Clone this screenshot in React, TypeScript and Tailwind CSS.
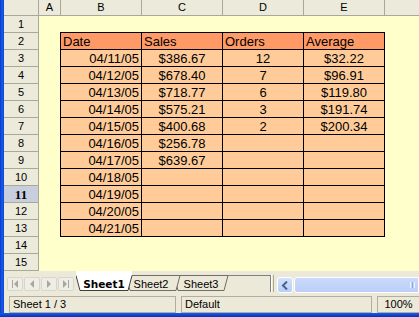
import React from "react";

const data: (string[] | null)[] = [
  ["04/11/05", "$386.67", "12", "$32.22"],
  ["04/12/05", "$678.40", "7", "$96.91"],
  ["04/13/05", "$718.77", "6", "$119.80"],
  ["04/14/05", "$575.21", "3", "$191.74"],
  ["04/15/05", "$400.68", "2", "$200.34"],
  ["04/16/05", "$256.78", "", ""],
  ["04/17/05", "$639.67", "", ""],
  ["04/18/05", "", "", ""],
  ["04/19/05", "", "", ""],
  ["04/20/05", "", "", ""],
  ["04/21/05", "", "", ""],
];

const sans = "font-['Liberation_Sans',Arial,sans-serif]";

function RowHead({ n }: { n: number }) {
  const active = n === 11;
  return (
    <div
      className={`w-[35px] shrink-0 border-r border-b border-[#ACA899] flex items-center justify-center leading-none ${
        active
          ? "bg-[#C7CFDD] font-['Liberation_Serif',serif] font-bold text-[13px]"
          : `bg-[#EBEADB] ${sans} text-[11px]`
      } text-black`}
    >
      {n}
    </div>
  );
}

function Row({ n }: { n: number }) {
  let content: React.ReactNode = null;
  if (n === 1) {
    content = <div className="w-[325px] shrink-0 border-b border-black" />;
  } else if (n === 2) {
    const heads = ["Date", "Sales", "Orders", "Average"];
    content = heads.map((h, i) => (
      <div
        key={h}
        className={`${i === 0 ? "w-[82px] border-l" : "w-[81px]"} shrink-0 border-r border-b border-black bg-[#FF9966] pl-[2px] flex items-center text-[13px] leading-none`}
      >
        {h}
      </div>
    ));
  } else if (n >= 3 && n <= 13) {
    const r = data[n - 3] as string[];
    content = (
      <>
        <div className="w-[82px] shrink-0 border-l border-r border-b border-black bg-[#FFCC99] pr-[2px] flex items-center justify-end text-[13px] leading-none">
          {r[0]}
        </div>
        {[1, 2, 3].map((i) => (
          <div
            key={i}
            className="w-[81px] shrink-0 border-r border-b border-black bg-[#FFCC99] flex items-center justify-center text-[13px] leading-none"
          >
            {r[i]}
          </div>
        ))}
      </>
    );
  }
  return (
    <div className="flex h-[17px]">
      <RowHead n={n} />
      <div className="w-[21px] shrink-0" />
      {content}
    </div>
  );
}

function NavBtn({ kind }: { kind: number }) {
  return (
    <div className="w-[16px] h-[14px] rounded-[2px] border border-[#D8D6CA] bg-[#EFEEE6] flex items-center justify-center">
      <svg width="10" height="8" viewBox="0 0 10 8">
        {kind === 0 && (
          <>
            <rect x="2" y="0" width="1" height="8" fill="#A9A79C" />
            <polygon points="8,0 4,4 8,8" fill="#A9A79C" />
          </>
        )}
        {kind === 1 && <polygon points="7,0 3,4 7,8" fill="#A9A79C" />}
        {kind === 2 && <polygon points="3,0 7,4 3,8" fill="#A9A79C" />}
        {kind === 3 && (
          <>
            <polygon points="2,0 6,4 2,8" fill="#A9A79C" />
            <rect x="7" y="0" width="1" height="8" fill="#A9A79C" />
          </>
        )}
      </svg>
    </div>
  );
}

function Tabs() {
  return (
    <div className="relative w-[194px] h-full shrink-0">
      <svg className="absolute inset-0" width="194" height="25" viewBox="0 0 194 25" shapeRendering="crispEdges">
        <line x1="0" y1="4.5" x2="194" y2="4.5" stroke="#808080" />
        <polygon points="98,4.5 152,4.5 148,19.5 102,19.5" fill="#ECE9D8" stroke="#6F6E68" shapeRendering="auto" />
        <polygon points="50,4.5 104,4.5 100,19.5 54,19.5" fill="#ECE9D8" stroke="#6F6E68" shapeRendering="auto" />
        <polygon points="0,0 56,0 56,4.5 52,19.5 4,19.5 0,4.5" fill="#FFFFFF" />
        <polyline points="0,4.5 4,19.5 52,19.5 56,4.5" fill="none" stroke="#404040" shapeRendering="auto" />
      </svg>
      <div className="relative flex pt-[6px] leading-[14px] text-[11px] text-black">
        <div className="w-[56px] text-center font-['DejaVu_Sans',sans-serif] font-bold text-[10.5px]">Sheet1</div>
        <div className={`w-[38px] text-center ${sans}`}>Sheet2</div>
        <div className={`w-[62px] text-center ${sans}`}>Sheet3</div>
      </div>
    </div>
  );
}

export default function App() {
  const rows = Array.from({ length: 15 }, (_, i) => i + 1);
  return (
    <div className={`w-[419px] h-[317px] overflow-hidden flex flex-col bg-[#ECE9D8] ${sans} text-black`}>
      <div className="flex flex-1 min-h-0">
        <div className="w-[4px] shrink-0 bg-gradient-to-r from-[#0839C8] via-[#1A5AE8] to-[#0B45D8]" />
        <div className="flex-1 flex flex-col min-w-0">
          {/* sheet */}
          <div className="bg-[#FFFFCC]">
            <div className="flex h-[16px] bg-[#EBEADB] text-[11px] leading-none">
              <div className="w-[35px] shrink-0 border-r border-b border-[#ACA899]" />
              <div className="w-[22px] shrink-0 border-r border-b border-[#ACA899] flex items-center justify-center">A</div>
              {["B", "C", "D", "E"].map((c) => (
                <div key={c} className="w-[81px] shrink-0 border-r border-b border-[#ACA899] flex items-center justify-center">
                  {c}
                </div>
              ))}
              <div className="flex-1 border-b border-[#ACA899]" />
            </div>
            {rows.map((n) => (
              <Row key={n} n={n} />
            ))}
          </div>
          {/* tab bar */}
          <div className="h-[25px] flex shrink-0">
            <div className="flex gap-[1px] ml-[3px] mt-[6px] h-[14px]">
              {[0, 1, 2, 3].map((k) => (
                <NavBtn key={k} kind={k} />
              ))}
            </div>
            <div className="w-[2px] shrink-0" />
            <Tabs />
            <div className="w-[7px] shrink-0 flex pt-[4px] pb-[4px]">
              <div className="w-[1px] bg-[#808080]" />
              <div className="w-[1px] bg-white" />
              <div className="w-[1px]" />
              <div className="w-[1px] bg-[#ACA899]" />
            </div>
            <div className="flex-1 flex mt-[6px] h-[16px]">
              <div className="w-[16px] h-[16px] shrink-0 rounded-[3px] border border-white bg-gradient-to-b from-[#D4E1FD] to-[#B8CCF9] flex items-center justify-center">
                <svg width="8" height="9" viewBox="0 0 8 9">
                  <polyline points="6,0.5 2,4.5 6,8.5" fill="none" stroke="#4D6185" strokeWidth="2" />
                </svg>
              </div>
              <div className="flex-1 ml-[1px] h-[16px] rounded-l-[3px] border border-white bg-gradient-to-b from-[#CAD9FC] to-[#BCCFF8] flex justify-end items-center pr-[3px] gap-[1px]">
                <div className="w-[1px] h-[6px] bg-[#EEF3FE]" />
                <div className="w-[1px] h-[6px] bg-[#8CA6E3]" />
                <div className="w-[1px] h-[6px] bg-[#EEF3FE]" />
              </div>
            </div>
          </div>
          {/* status bar */}
          <div className="h-[17px] flex shrink-0 text-[11px] leading-none">
            <div className="ml-[5px] w-[167px] shrink-0 border border-[#B0AEA2] flex items-center pl-[3px]">Sheet 1 / 3</div>
            <div className="ml-[5px] w-[191px] shrink-0 border border-[#B0AEA2] flex items-center pl-[3px]">Default</div>
            <div className="ml-[5px] flex-1 border border-r-0 border-[#B0AEA2] flex items-center justify-center">100%</div>
          </div>
        </div>
      </div>
      <div className="h-[4px] shrink-0 bg-gradient-to-b from-[#1A5AE8] to-[#0831B8]" />
    </div>
  );
}
